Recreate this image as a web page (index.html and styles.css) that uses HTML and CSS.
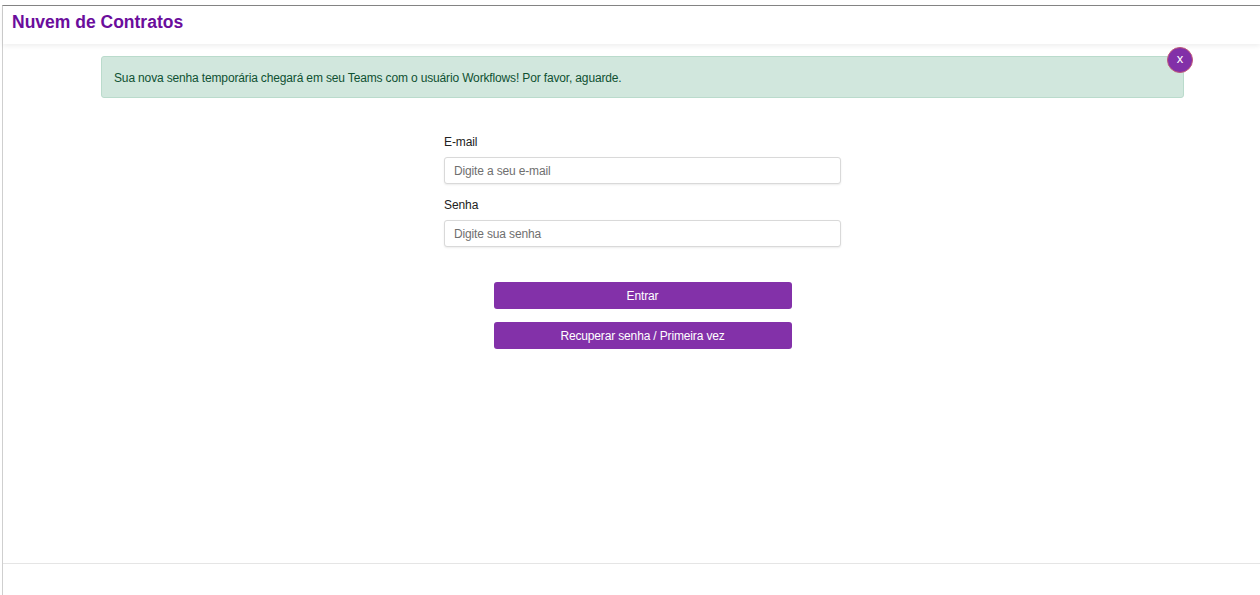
FILE: index.html
```html
<!DOCTYPE html>
<html lang="pt-BR">
<head>
<meta charset="utf-8">
<title>Nuvem de Contratos</title>
<link rel="stylesheet" href="styles.css">
</head>
<body>
<div class="frame">
  <header class="topbar">
    <h1 class="brand">Nuvem de Contratos</h1>
  </header>
  <main class="content">
    <div class="alert">
      Sua nova senha temporária chegará em seu Teams com o usuário Workflows! Por favor, aguarde.
      <button class="alert-close" type="button">x</button>
    </div>
    <form class="login">
      <div class="field">
        <label class="field-label">E-mail</label>
        <input class="field-input" type="text" placeholder="Digite a seu e-mail">
      </div>
      <div class="field">
        <label class="field-label">Senha</label>
        <input class="field-input" type="password" placeholder="Digite sua senha">
      </div>
      <div class="actions">
        <button class="btn" type="button">Entrar</button>
        <button class="btn" type="button">Recuperar senha / Primeira vez</button>
      </div>
    </form>
  </main>
  <footer class="footer"></footer>
</div>
</body>
</html>
```

FILE: styles.css
```css
html, body {
  margin: 0;
  padding: 0;
  background: #ffffff;
  font-family: "Liberation Sans", Arial, sans-serif;
}

body {
  padding: 5px 0 0 2px;
  height: 595px;
  box-sizing: border-box;
  overflow: hidden;
}

.frame {
  border-top: 1px solid #858585;
  border-left: 1px solid #cfcfcf;
  height: 590px;
  box-sizing: border-box;
  display: flex;
  flex-direction: column;
}

.topbar {
  height: 38px;
  display: flex;
  align-items: center;
  padding-left: 9px;
  box-shadow: 0 2px 5px rgba(0, 0, 0, 0.07);
  position: relative;
  z-index: 1;
}

.brand {
  margin: 0;
  font-size: 17.5px;
  font-weight: bold;
  color: #6b0d9c;
  line-height: 22px;
  position: relative;
  top: -3px;
}

.content {
  flex: 1;
  padding: 12px 76px 0 98px;
  display: flex;
  flex-direction: column;
  align-items: center;
}

.alert {
  position: relative;
  align-self: stretch;
  background: #d1e7dd;
  border: 1px solid #badbcc;
  border-radius: 3px;
  color: #0f5132;
  font-size: 12px;
  letter-spacing: -0.15px;
  line-height: 16px;
  padding: 13px 12px 11px 12px;
}

.alert-close {
  position: absolute;
  top: -10px;
  right: -10px;
  width: 26px;
  height: 26px;
  border-radius: 50%;
  border: 1px solid #c0587a;
  background: #8230a8;
  color: #ffffff;
  font-family: "Liberation Sans", Arial, sans-serif;
  font-size: 13px;
  line-height: 20px;
  padding: 0 0 3px 0;
  text-align: center;
  cursor: pointer;
}

.login {
  width: 397px;
  margin-top: 34px;
  display: flex;
  flex-direction: column;
}

.field {
  display: flex;
  flex-direction: column;
  margin-bottom: 11px;
}

.field-label {
  font-size: 12px;
  letter-spacing: -0.1px;
  line-height: 20px;
  color: #222222;
  margin-bottom: 5px;
}

.field-input {
  height: 27px;
  box-sizing: border-box;
  border: 1px solid #d9d9d9;
  border-radius: 3px;
  box-shadow: 0 1px 2px rgba(0, 0, 0, 0.08);
  padding: 0 9px;
  font-family: "Liberation Sans", Arial, sans-serif;
  font-size: 12px;
  letter-spacing: -0.15px;
  color: #333333;
  outline: none;
}

.field-input::placeholder {
  color: #6f6f6f;
}

.actions {
  margin-top: 24px;
  display: flex;
  flex-direction: column;
  align-items: center;
  gap: 13px;
}

.btn {
  width: 298px;
  height: 27px;
  border: none;
  border-radius: 3px;
  background: #8331a9;
  color: #ffffff;
  font-family: "Liberation Sans", Arial, sans-serif;
  font-size: 12px;
  letter-spacing: -0.15px;
  cursor: pointer;
}

.footer {
  height: 31px;
  border-top: 1px solid #e5e5e5;
}
```
